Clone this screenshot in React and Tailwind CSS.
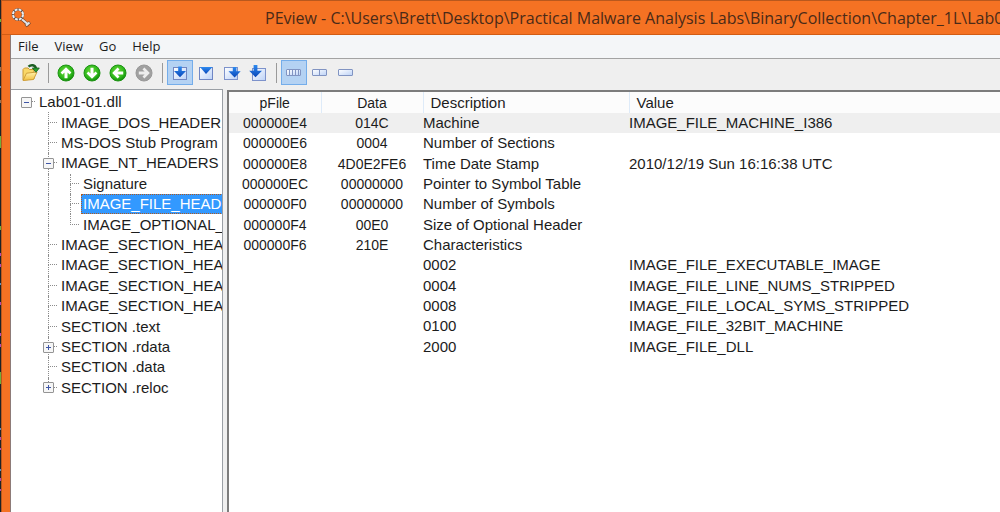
import React from "react";

const tree = [
  { level: 0, label: "Lab01-01.dll", state: "open" },
  { level: 1, label: "IMAGE_DOS_HEADER" },
  { level: 1, label: "MS-DOS Stub Program" },
  { level: 1, label: "IMAGE_NT_HEADERS", state: "open" },
  { level: 2, label: "Signature" },
  { level: 2, label: "IMAGE_FILE_HEADER", selected: true },
  { level: 2, label: "IMAGE_OPTIONAL_HEADER", last: true },
  { level: 1, label: "IMAGE_SECTION_HEADER .text" },
  { level: 1, label: "IMAGE_SECTION_HEADER .rdata" },
  { level: 1, label: "IMAGE_SECTION_HEADER .data" },
  { level: 1, label: "IMAGE_SECTION_HEADER .reloc" },
  { level: 1, label: "SECTION .text" },
  { level: 1, label: "SECTION .rdata", state: "closed" },
  { level: 1, label: "SECTION .data" },
  { level: 1, label: "SECTION .reloc", state: "closed", last: true },
];

const rows = [
  ["000000E4", "014C", "Machine", "IMAGE_FILE_MACHINE_I386"],
  ["000000E6", "0004", "Number of Sections", ""],
  ["000000E8", "4D0E2FE6", "Time Date Stamp", "2010/12/19 Sun 16:16:38 UTC"],
  ["000000EC", "00000000", "Pointer to Symbol Table", ""],
  ["000000F0", "00000000", "Number of Symbols", ""],
  ["000000F4", "00E0", "Size of Optional Header", ""],
  ["000000F6", "210E", "Characteristics", ""],
  ["", "", "0002", "IMAGE_FILE_EXECUTABLE_IMAGE"],
  ["", "", "0004", "IMAGE_FILE_LINE_NUMS_STRIPPED"],
  ["", "", "0008", "IMAGE_FILE_LOCAL_SYMS_STRIPPED"],
  ["", "", "0100", "IMAGE_FILE_32BIT_MACHINE"],
  ["", "", "2000", "IMAGE_FILE_DLL"],
];

function Gradients() {
  return (
    <svg width="0" height="0" className="absolute" aria-hidden="true">
      <defs>
        <radialGradient id="green" cx="0.45" cy="0.4" r="0.6">
          <stop offset="0" stopColor="#6fdc3c" />
          <stop offset="0.7" stopColor="#2fb81c" />
          <stop offset="1" stopColor="#118a0a" />
        </radialGradient>
        <linearGradient id="pane" x1="0" y1="0" x2="1" y2="1">
          <stop offset="0" stopColor="#ffffff" />
          <stop offset="1" stopColor="#bcd2f7" />
        </linearGradient>
        <linearGradient id="blue" x1="0" y1="0" x2="0" y2="1">
          <stop offset="0" stopColor="#2f8bf0" />
          <stop offset="1" stopColor="#0846b8" />
        </linearGradient>
        <linearGradient id="folder" x1="0" y1="0" x2="0" y2="1">
          <stop offset="0" stopColor="#fff3ae" />
          <stop offset="1" stopColor="#f3bf3e" />
        </linearGradient>
      </defs>
    </svg>
  );
}

function DesktopEdge() {
  return (
    <svg width="1" height="512" viewBox="0 0 1 512" aria-hidden="true">
      <path d="M0.500 19v3M0.500 136v12M0.500 226v4M0.500 372v12" stroke="#6fae3a" />
      <path d="M0.500 67v4M0.500 100v3" stroke="#9a7152" />
      <path d="M0.500 86v2M0.500 283v2M0.500 428v2M0.500 469v2" stroke="#5b8fc0" />
      <path d="M0.500 253v3M0.500 264v3M0.500 302v3M0.500 333v3M0.500 344v3M0.500 437v3M0.500 448v2M0.500 478v3M0.500 489v2" stroke="#b548b0" />
    </svg>
  );
}

function KeyIcon() {
  return (
    <svg width="20" height="20" viewBox="0 0 20 20" fill="none" aria-hidden="true">
      <path d="M10 10.500l8 7M14.500 18l4.500-3.800" stroke="#7a4a30" strokeWidth="3.200" />
      <path d="M10 10.500l7.500 6.300M15 17.500l3.500-3" stroke="#dfe5ec" strokeWidth="2" />
      <circle cx="7" cy="6.500" r="5" stroke="#5a4a46" strokeWidth="2.600" />
      <circle cx="7" cy="6.500" r="5" stroke="#edf1f5" strokeWidth="2" strokeDasharray="2.800 1.127" />
    </svg>
  );
}

function FolderIcon() {
  return (
    <svg width="20" height="20" viewBox="0 0 20 20" aria-hidden="true">
      <path d="M3 17V6.500l1.500-1.500H8l1.500 1.500H14V16z" fill="#f9d768" stroke="#c79a35" />
      <path d="M3 17.500l3.500-7.300 10.500-1.200-3.500 7.500z" fill="url(#folder)" stroke="#d0a03a" />
      <path d="M8.500 3.700C11 1.300 15 1.700 16 5.500" fill="none" stroke="#1e5f24" strokeWidth="2.400" />
      <path d="M12.300 5h7l-3.300 4.300z" fill="#27a12d" stroke="#175c1c" strokeWidth="0.800" />
    </svg>
  );
}

const turns = { up: 0, right: 90, down: 180, left: 270 };
function RoundArrow({ dir, gray }) {
  return (
    <svg width="18" height="18" viewBox="0 0 18 18" aria-hidden="true">
      <circle cx="9" cy="9" r="8" fill={gray ? "#a0a0a0" : "url(#green)"} stroke={gray ? "#989898" : "#1d9413"} />
      <path
        transform={`rotate(${turns[dir]} 9 9)`}
        d="M9 3.200L3.600 8.600l1.800 1.900 2.100-2.100V14.200h3V8.400l2.100 2.100 1.800-1.900z"
        fill={gray ? "#eeeeee" : "#ffffff"}
      />
    </svg>
  );
}

function PaneIcon({ kind }) {
  return (
    <svg width="18" height="18" viewBox="0 0 18 18" aria-hidden="true">
      {kind === "down" && (
        <>
          <rect x="2.500" y="3.500" width="13" height="12" fill="url(#pane)" stroke="#7186c2" />
          <path d="M7.200 2.500h3.600v4.500H15l-6 6.300-6-6.300h4.200z" fill="url(#blue)" />
        </>
      )}
      {kind === "triangle" && (
        <>
          <rect x="2.500" y="3.500" width="13" height="12" fill="url(#pane)" stroke="#6f86c4" />
          <path d="M3 3h12.500L9 10z" fill="url(#blue)" />
        </>
      )}
      {kind === "right" && (
        <>
          <rect x="1.500" y="3.500" width="13" height="12" fill="url(#pane)" stroke="#7d92cb" />
          <path d="M9.800 3h3.600v4.300h4.300L11.600 13.500 5.500 7.300h4.300z" fill="url(#blue)" />
        </>
      )}
      {kind === "left" && (
        <>
          <rect x="3.500" y="4.500" width="13" height="12" fill="url(#pane)" stroke="#7d92cb" />
          <path d="M4.600 1h3.800v5.700H13l-6.500 6.600L0.200 6.700h4.400z" fill="url(#blue)" />
        </>
      )}
    </svg>
  );
}

function BarIcon({ parts }) {
  return (
    <svg width="16" height="8" viewBox="0 0 16 8" aria-hidden="true">
      <rect x="0.500" y="0.500" width="14" height="6" rx="0.500" fill="url(#pane)" stroke="#8194c2" />
      {parts === 4 && <path d="M3.500 1v5M6.500 1v5M9.500 1v5M12.500 1v5" stroke="#8194c2" />}
      {parts === 2 && <path d="M7.500 1v5" stroke="#8194c2" />}
    </svg>
  );
}

function Tool({ label, pressed, disabled, children }) {
  return (
    <button
      type="button"
      aria-label={label}
      aria-pressed={pressed}
      disabled={disabled}
      className={
        pressed
          ? "flex h-[25px] w-[26px] items-center justify-center border border-[#74adea] bg-[#b4d2f3]"
          : "flex h-[25px] w-[26px] items-center justify-center"
      }
    >
      {children}
    </button>
  );
}

function Separator() {
  return (
    <span className="flex w-[10px] justify-center" aria-hidden="true">
      <span className="h-5 w-px bg-[#9a9a9a]" />
    </span>
  );
}

function Guide({ line, branch, last, state, label }) {
  return (
    <span className="grid h-full w-[22px] shrink-0 grid-cols-2 grid-rows-2">
      <span
        className={
          (line ? "border-l " : "") +
          (branch ? "border-b " : "") +
          "col-start-2 row-start-1 mr-[2px] border-dotted border-[#8c8c8c]"
        }
      />
      {line && !last && <span className="col-start-2 row-start-2 border-l border-dotted border-[#8c8c8c]" />}
      {state && (
        <button
          type="button"
          aria-label={(state === "open" ? "Collapse " : "Expand ") + label}
          className="z-10 col-span-2 col-start-1 row-span-2 row-start-1 flex h-[11px] w-[11px] items-center justify-center place-self-center rounded-[1px] border border-[#949494] bg-[#f6f6f6]"
        >
          <svg width="7" height="7" viewBox="0 0 7 7" aria-hidden="true">
            <path d={state === "open" ? "M1 3.500h5" : "M1 3.500h5M3.500 1v5"} stroke="#3f56a6" />
          </svg>
        </button>
      )}
    </span>
  );
}

function TreeRow({ level, label, state, selected, last }) {
  return (
    <li role="treeitem" aria-level={level + 1} aria-selected={!!selected} className="flex min-h-0 flex-1 items-center">
      {level > 0 && <span className="w-[22px] shrink-0" />}
      {level === 2 && <Guide line />}
      <Guide line={level > 0} branch last={last} state={state} label={label} />
      <span
        className={
          selected
            ? "flex h-full flex-1 items-center border border-dotted border-[#b05a20] bg-[#3399ff] pl-px whitespace-nowrap text-white"
            : "flex-1 pl-[2px] whitespace-nowrap"
        }
      >
        {label}
      </span>
    </li>
  );
}

export default function App() {
  return (
    <div className="flex min-h-screen w-full overflow-hidden bg-[#f57223] font-['Liberation_Sans',Arial,sans-serif] text-[15px] leading-[18px] text-[#1c1c1c]">
      <Gradients />
      <div className="w-px shrink-0 overflow-hidden bg-[#1c2226]">
        <DesktopEdge />
      </div>
      <div className="flex min-w-0 flex-1 flex-col border-t border-l border-[#b9581d]">
        <header className="flex h-[34px] shrink-0 items-center border-b border-[#d25c14] pl-[9px]">
          <KeyIcon />
          <h1 className="flex-1 overflow-hidden pl-[234px] font-['Open_Sans','Noto_Sans',sans-serif] text-[16px] leading-6 whitespace-nowrap text-[#4a2a18]">
            PEview - C:\Users\Brett\Desktop\Practical Malware Analysis Labs\BinaryCollection\Chapter_1L\Lab01-01.dll
          </h1>
        </header>

        <div className="ml-2 flex min-w-0 flex-1 flex-col border-l border-[#8d7b78] bg-[#efefef]">
          <nav
            aria-label="Menu"
            className="flex h-6 shrink-0 items-center gap-4 border-b border-[#a3a3a3] bg-[#f4f6f8] pb-[2px] pl-[7px] font-['Open_Sans','Noto_Sans',sans-serif] text-[13px]"
          >
            <button type="button">File</button>
            <button type="button">View</button>
            <button type="button">Go</button>
            <button type="button">Help</button>
          </nav>

          <div role="toolbar" aria-label="Tools" className="flex h-[30px] shrink-0 items-center bg-[#efefef] pb-[3px] pl-[6px]">
            <Tool label="Open file"><FolderIcon /></Tool>
            <Separator />
            <Tool label="Up"><RoundArrow dir="up" /></Tool>
            <Tool label="Down"><RoundArrow dir="down" /></Tool>
            <Tool label="Back"><RoundArrow dir="left" /></Tool>
            <Tool label="Forward" disabled><RoundArrow dir="right" gray /></Tool>
            <Separator />
            <Tool label="File offset" pressed><PaneIcon kind="down" /></Tool>
            <Tool label="Section offset"><PaneIcon kind="triangle" /></Tool>
            <Tool label="Relative virtual address"><PaneIcon kind="right" /></Tool>
            <Tool label="Virtual address"><PaneIcon kind="left" /></Tool>
            <Separator />
            <Tool label="Byte view" pressed><BarIcon parts={4} /></Tool>
            <Tool label="Word view"><BarIcon parts={2} /></Tool>
            <Tool label="Double word view"><BarIcon parts={1} /></Tool>
          </div>

          <main className="flex min-w-0 flex-1">
            <div className="w-[212px] shrink-0 overflow-hidden border-t border-r border-[#9a9fa5] bg-white pt-[2px] pl-1">
              <ul role="tree" aria-label="File structure" className="flex h-[306px] flex-col">
                {tree.map((node, i) => (
                  <TreeRow key={i} {...node} />
                ))}
              </ul>
            </div>
            <div className="w-1 shrink-0" />
            <div className="mt-px min-w-0 flex-1 overflow-hidden border-t-2 border-l-2 border-[#7c7c7c] bg-white">
              <table className="h-[265px] w-full table-fixed border-collapse text-left">
                <colgroup>
                  <col className="w-[92px]" />
                  <col className="w-[102px]" />
                  <col className="w-[206px]" />
                  <col />
                </colgroup>
                <thead>
                  <tr className="h-[21px] bg-[#fcfcfc]">
                    <th scope="col" className="border-r border-[#deebf9] p-0 text-center text-[14px] font-normal">pFile</th>
                    <th scope="col" className="border-r border-[#deebf9] p-0 text-center text-[14px] font-normal">Data</th>
                    <th scope="col" className="border-r border-[#deebf9] py-0 pr-0 pl-[7px] font-normal">Description</th>
                    <th scope="col" className="py-0 pr-0 pl-[7px] font-normal">Value</th>
                  </tr>
                </thead>
                <tbody>
                  {rows.map((row, i) => (
                    <tr key={i} className={i === 0 ? "bg-[#efefef]" : "bg-white"}>
                      <td className="p-0 text-center text-[14px]">{row[0]}</td>
                      <td className="p-0 text-center text-[14px]">{row[1]}</td>
                      <td className="p-0">{row[2]}</td>
                      <td className="p-0 whitespace-nowrap">{row[3]}</td>
                    </tr>
                  ))}
                </tbody>
              </table>
            </div>
          </main>
        </div>
      </div>
    </div>
  );
}
